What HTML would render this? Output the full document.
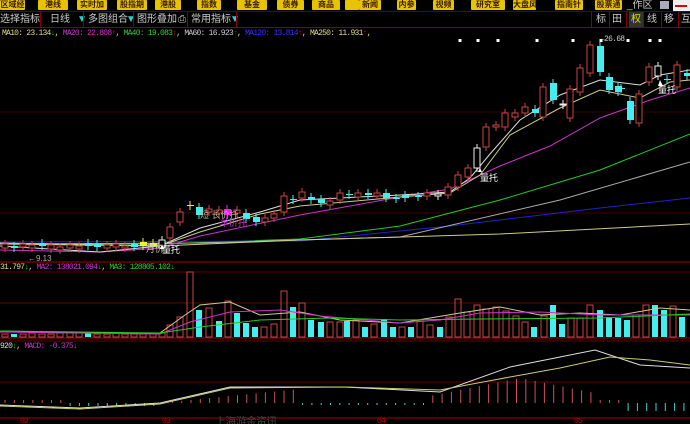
<!DOCTYPE html>
<html><head><meta charset="utf-8"><style>
html,body{margin:0;padding:0;background:#000;width:690px;height:424px;overflow:hidden;font-family:"Liberation Sans","Noto Sans CJK SC",sans-serif}
.wrap{position:relative;width:690px;height:424px}
.btn{position:absolute;top:0;height:10px;background:#e8c400;color:#3a1a00;font-size:8px;line-height:10px;text-align:center;font-weight:bold;border-radius:1px;white-space:nowrap;overflow:hidden}
.tb{position:absolute;top:12px;height:15px;color:#ccc;font-size:10px;line-height:15px;white-space:nowrap}
.sep{position:absolute;top:12px;width:1px;height:15px;background:#800}
.lbl{position:absolute;font-family:"Liberation Mono","Noto Sans CJK SC",monospace;font-size:8px;white-space:nowrap;letter-spacing:-0.75px}
svg{position:absolute;left:0;top:0}
</style></head><body><div class="wrap">
<div class="btn" style="left:0;width:25px">区域经</div>
<div class="btn" style="left:38px;width:30px">港线</div>
<div class="btn" style="left:77px;width:30px">实时加</div>
<div class="btn" style="left:117px;width:30px">股指期</div>
<div class="btn" style="left:155px;width:26px">港股</div>
<div class="btn" style="left:197px;width:24px">指数</div>
<div class="btn" style="left:237px;width:30px">基金</div>
<div class="btn" style="left:277px;width:27px">债券</div>
<div class="btn" style="left:312px;width:28px">商品</div>
<div class="btn" style="left:345px;width:14px"></div>
<div class="btn" style="left:359px;width:22px">新闻</div>
<div class="btn" style="left:397px;width:19px">内参</div>
<div class="btn" style="left:433px;width:21px">视频</div>
<div class="btn" style="left:471px;width:34px">研究室</div>
<div class="btn" style="left:513px;width:23px">大盘风</div>
<div class="btn" style="left:555px;width:28px">指南针</div>
<div class="btn" style="left:595px;width:27px">股票通</div>
<div style="position:absolute;left:627px;top:0;color:#ccc;font-size:10px;line-height:11px">_作区</div>
<div style="position:absolute;left:660px;top:1px;width:9px;height:8px;background:#aab"></div>
<div style="position:absolute;left:673px;top:0;width:17px;height:11px;background:#eee"></div>
<div style="position:absolute;left:675px;top:5px;width:12px;height:2px;background:#d00"></div>
<div style="position:absolute;left:0;top:11px;width:690px;height:1px;background:#600"></div>
<div class="tb" style="left:0">选择指标</div>
<div class="sep" style="left:40px"></div>
<div class="tb" style="left:50px">日线</div>
<div class="tb" style="left:77px;color:#3cc">▼</div>
<div class="sep" style="left:83px"></div>
<div class="tb" style="left:88px">多图组合</div>
<div class="tb" style="left:126px;color:#3cc">▼</div>
<div class="sep" style="left:133px"></div>
<div class="tb" style="left:137px">图形叠加</div>
<div class="tb" style="left:178px">⎙</div>
<div class="sep" style="left:187px"></div>
<div class="tb" style="left:191px">常用指标</div>
<div class="tb" style="left:230px;color:#3cc">▼</div>
<div class="sep" style="left:236px"></div>
<div class="sep" style="left:591px"></div><div class="tb" style="left:596px">标</div>
<div class="sep" style="left:609px"></div><div class="tb" style="left:612px">田</div>
<div class="sep" style="left:626px"></div><div class="tb" style="left:629px;color:#dd0;background:#333;width:14px;text-align:center">权</div>
<div class="sep" style="left:643px"></div><div class="tb" style="left:647px">线</div>
<div class="sep" style="left:661px"></div><div class="tb" style="left:664px">移</div>
<div class="sep" style="left:678px"></div><div class="tb" style="left:681px">互</div>
<div style="position:absolute;left:0;top:27px;width:690px;height:1px;background:#800"></div>
<div class="lbl" style="left:2px;top:29px;color:#dd8"><span>MA10: 23.134</span><span style="color:#0c0">↓</span>, <span style="color:#c3c">MA20: 22.808</span><span style="color:#d00">↑</span>, <span style="color:#3c3">MA40: 19.083</span><span style="color:#d00">↑</span>, <span style="color:#ccc">MA60: 16.923</span><span style="color:#d00">↑</span>, <span style="color:#33f">MA120: 13.814</span><span style="color:#d00">↑</span>, MA250: 11.931<span style="color:#d00">↑</span>,</div>
<div class="lbl" style="left:0;top:263px;color:#dd8">31.797<span style="color:#0c0">↓</span>, <span style="color:#c3c">MA2: 138021.094</span><span style="color:#0c0">↓</span>, <span style="color:#3c3">MA3: 128805.102</span><span style="color:#0c0">↓</span></div>
<div class="lbl" style="left:0;top:342px;color:#ddd">920<span style="color:#0c0">↓</span>, <span style="color:#c3c">MACD: -0.375</span><span style="color:#0c0">↓</span></div>
<div class="lbl" style="left:600px;top:35px;color:#ccc">←26.68</div>
<svg id="s" width="690" height="424"></svg>
<div class="lbl" style="left:20px;top:417px;color:#c00">02</div>
<div class="lbl" style="left:162px;top:417px;color:#c00">03</div>
<div class="lbl" style="left:377px;top:417px;color:#c00">04</div>
<div class="lbl" style="left:574px;top:417px;color:#c00">05</div>
<div class="lbl" style="left:215px;top:413px;color:#444;font-size:11px">上海游金资讯</div>
</div>
<script>
var s=document.getElementById('s'),h='';
function L(x1,y1,x2,y2,c,w){h+='<line x1="'+x1+'" y1="'+y1+'" x2="'+x2+'" y2="'+y2+'" stroke="'+c+'" stroke-width="'+(w||1)+'"/>';}
function P(pts,c,w){h+='<polyline fill="none" stroke="'+c+'" stroke-width="'+(w||1)+'" points="'+pts+'"/>';}
[[262,'#a00',1],[272,'#600',1],[303,'#600',1],[338,'#a00',1],[341,'#600',1],[382,'#600',1],[418,'#a00',1],[213,'#400',1],[112,'#300',1]].forEach(function(a){L(0,a[0],690,a[0],a[1],a[2]);});
[460,478,498,537,573,601,628,650,660].forEach(function(x){h+='<rect x="'+(x-1.5)+'" y="39" width="3" height="3" fill="#fff"/>';});
P("0,244 160,244 300,239 400,226 500,200 600,170 690,134",'#2c2');
P("0,242 300,241 450,226 600,208 690,198",'#22c');
P("0,244 200,243 400,237 560,200 690,162",'#aaa');
P("0,243 160,246 300,240 500,234 690,224",'#cc8');
P("0,250 100,252 160,248 200,236 300,215 400,197 450,189 500,166 550,146 600,118 650,100 690,88",'#c3c');
P("0,246 100,252 160,246 200,228 260,212 300,200 400,195 450,192 470,178 490,154 520,120 560,95 600,80 640,85 660,75 690,70",'#ddd');
P("0,244 160,246 200,232 260,214 300,206 400,197 450,193 480,175 510,135 560,108 600,90 640,98 670,82 690,80",'#cc8');
var C=[[5,244,248,'r'],[14,246,248,'c'],[23,244,247,'r'],[32,245,248,'r'],[42,243,246,'c'],[51,245,249,'r'],[60,247,250,'r'],[70,245,248,'r'],[79,246,249,'r'],[88,243,246,'c'],[97,244,247,'c'],[107,245,248,'r'],[116,244,247,'r'],[125,246,248,'r'],[134,244,247,'c'],[143,242,246,'y'],[153,243,246,'y'],[162,240,248,'w'],[170,227,238,'r'],[180,212,222,'r'],[190,205,206,'y'],[199,207,215,'c'],[209,209,212,'r'],[219,210,213,'r'],[227,209,215,'m'],[237,210,213,'r'],[246,213,219,'c'],[256,217,222,'c'],[265,218,222,'r'],[274,214,218,'r'],[284,196,212,'r'],[293,199,200,'c'],[302,192,198,'r'],[311,197,200,'c'],[321,199,203,'c'],[330,201,205,'r'],[340,193,200,'r'],[349,194,195,'c'],[358,193,197,'r'],[368,193,195,'c'],[377,193,196,'r'],[386,193,198,'c'],[396,198,199,'c'],[405,195,198,'c'],[418,196,197,'c'],[427,193,196,'r'],[438,194,196,'w'],[448,187,195,'r'],[458,175,187,'r'],[468,168,177,'r'],[477,148,168,'w'],[486,127,147,'r'],[496,125,127,'r'],[505,113,127,'r'],[515,113,117,'r'],[525,107,113,'r'],[535,109,113,'c'],[543,87,117,'r'],[553,83,100,'c'],[563,104,105,'w'],[570,89,118,'r'],[580,68,92,'r'],[590,45,73,'r'],[600,46,72,'c'],[609,77,90,'c'],[618,86,92,'c'],[621,88,89,'c'],[630,101,120,'c'],[639,94,123,'r'],[649,67,82,'r'],[658,66,76,'w'],[667,79,80,'c'],[677,65,87,'r'],[687,73,76,'c']];
var col={r:'#c44',c:'#4ee',w:'#eee',y:'#ee4',m:'#e2e'};
C.forEach(function(c){var k=col[c[3]];L(c[0],c[1]-4,c[0],c[2]+4,k);
if(c[3]=='r'||c[3]=='w')h+='<rect x="'+(c[0]-3)+'" y="'+c[1]+'" width="6" height="'+Math.max(1,c[2]-c[1])+'" fill="#000" stroke="'+k+'"/>';
else h+='<rect x="'+(c[0]-3)+'" y="'+c[1]+'" width="7" height="'+Math.max(1,c[2]-c[1])+'" fill="'+k+'"/>';});
h+='<text x="200" y="218" fill="#bb9" font-size="9">短 长价托</text><text x="220" y="226" fill="#c3c" font-size="9">羊价托</text><text x="146" y="252" fill="#cc8" font-size="9">月价</text><text x="162" y="253" fill="#fff" font-size="9">量托</text><text x="480" y="181" fill="#fff" font-size="9">量托</text><text x="658" y="93" fill="#fff" font-size="9">量托</text><text x="28" y="261" fill="#aaa" font-size="8">←9.13</text>';
h+='<polygon points="478,172 482,172 480,168" fill="#fff"/><polygon points="658,86 663,86 660,80" fill="#fff"/><polygon points="160,249 164,249 162,244" fill="#fff"/>';
var V=[[5,334],[14,334,'c'],[23,334],[32,333],[42,334],[51,334],[60,333],[70,333],[79,333],[88,333,'c'],[97,334],[107,334],[116,333],[125,334],[134,334],[143,334],[153,334],[162,333],[170,325],[180,317],[190,272],[199,310,'c'],[209,308],[219,321,'c'],[228,301],[237,313,'c'],[246,323,'c'],[255,327,'c'],[264,327],[274,324],[284,291],[293,307,'c'],[302,303],[311,320,'c'],[321,322,'c'],[330,322],[340,322],[347,321,'c'],[356,320],[365,327,'c'],[374,324],[384,319,'c'],[393,327,'c'],[402,327],[411,327,'c'],[420,321],[430,325],[440,327,'c'],[449,317],[458,299],[467,312],[477,305],[486,309],[496,307],[506,311],[516,316],[525,322],[534,327,'c'],[544,316],[553,305,'c'],[562,324,'c'],[571,318],[580,318],[590,305],[600,310,'c'],[609,317,'c'],[618,318,'c'],[627,320,'c'],[636,315],[646,305],[655,305,'c'],[664,310,'c'],[673,306],[682,317,'c']];
V.forEach(function(v){if(v[2])h+='<rect x="'+(v[0]-3)+'" y="'+v[1]+'" width="6" height="'+(337-v[1])+'" fill="#4ee"/>';else h+='<rect x="'+(v[0]-3)+'" y="'+v[1]+'" width="6" height="'+(337-v[1])+'" fill="none" stroke="#c44"/>';});
P("0,331 100,333 160,333 185,315 200,305 230,302 260,315 300,312 340,320 400,323 460,313 500,307 540,315 580,313 620,315 660,308 690,310",'#cc8');
P("0,332 160,334 190,322 230,312 280,310 320,316 400,323 440,320 480,313 540,312 600,315 640,315 690,315",'#c3c');
P("0,331 160,333 200,327 260,320 330,318 400,320 480,319 600,318 690,314",'#2c2');
for(var x=5;x<690;x+=9.3){var v;if(x<160)v=(x<70?-3:3);else if(x<300)v=-(x-160)/10;else if(x<430)v=2;else if(x<600)v=-25+Math.abs(x-520)/5;else if(x<620)v=-3;else v=8;
L(x,403,x,403+v,v>0?'#4cc':'#c55');}
P("0,405 80,408 160,403 230,387 345,387 440,392 510,367 555,358 595,350 640,365 690,368",'#ddd');
P("0,406 80,409 160,404 230,388 345,387 440,390 510,377 560,368 610,357 650,360 690,365",'#cc6');
s.innerHTML=h;
</script></body></html>
